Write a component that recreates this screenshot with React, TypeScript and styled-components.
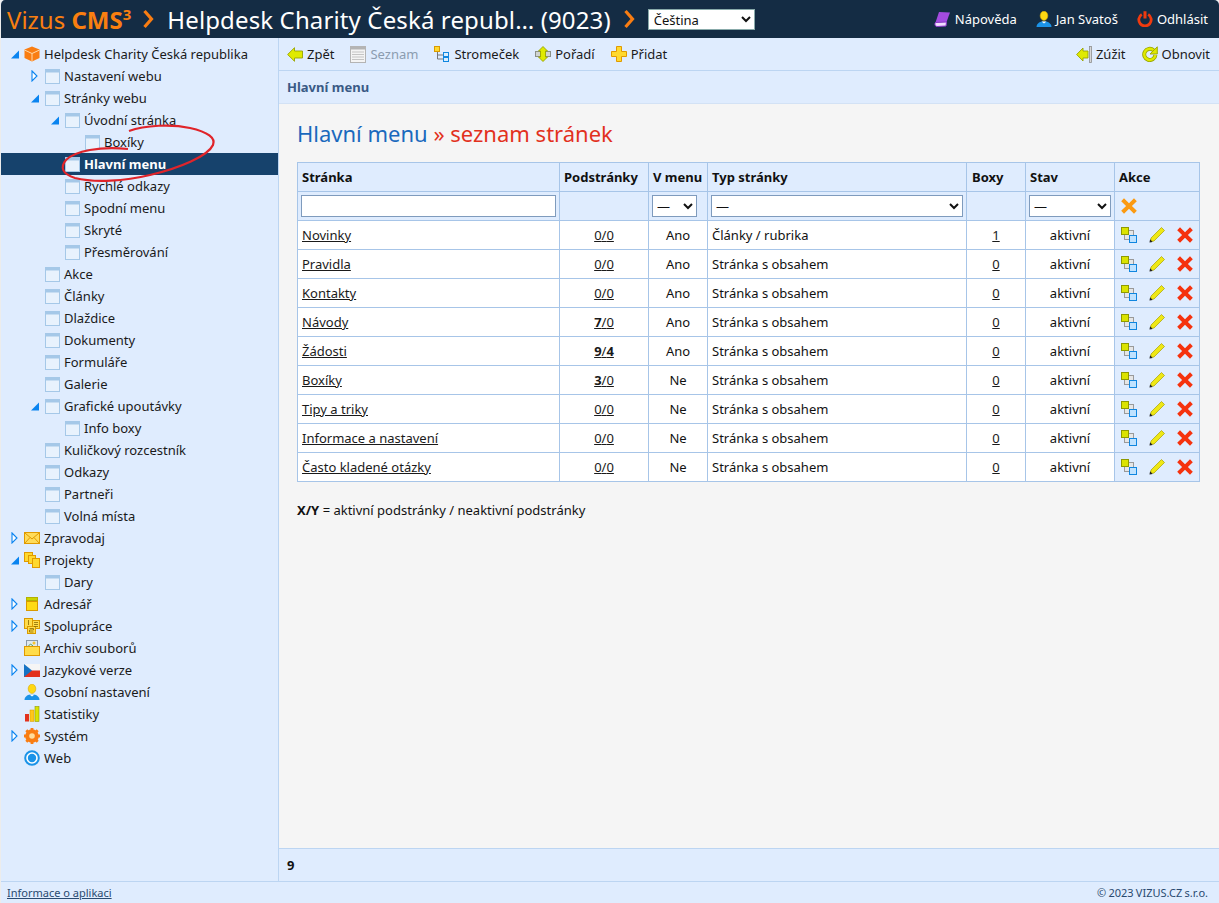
import React, {ReactNode} from 'react';
import styled, {createGlobalStyle} from 'styled-components';

const GlobalStyle = createGlobalStyle`
    html, body {
        margin: 0;
        height: 100%;
        background: #f0f0f0;
    }
    body {
        font-family: "Noto Sans", "Liberation Sans", sans-serif;
        font-size: 13px;
        color: #111;
    }
    #root {
        height: 100%;
    }
`;

const Page = styled.div`
    position: relative;
    height: 903px;
    display: flex;
    flex-direction: column;
    overflow: hidden;
    background: #dfecfe;
    border-left: 1px solid #ececec;
    border-radius: 5px 5px 0 0;
`;

const Header = styled.header`
    height: 38px;
    flex: none;
    display: flex;
    align-items: center;
    padding: 0 11px 0 6px;
    background: #142c44;
    color: #fff;
`;

const Logo = styled.div`
    font-size: 24px;
    color: #f97f10;
    white-space: nowrap;
    b { font-weight: 700; }
    sup { font-size: 15px; font-weight: 700; line-height: 0; vertical-align: 9px; }
`;

const Chevron = styled.svg<{$before: number; $after: number}>`
    flex: none;
    width: 12px;
    height: 20px;
    margin: 0 ${(p) => p.$after}px 0 ${(p) => p.$before}px;
`;

const SiteTitle = styled.div`
    font-size: 24px;
    white-space: nowrap;
    letter-spacing: 0.13px;
`;

const LangSelect = styled.select`
    width: 107px;
    height: 21px;
    font: 13px "Noto Sans", sans-serif;
    background: #fff;
    color: #111;
    border: 1px solid #8aa;
    padding: 0 0 0 1px;
    margin: 0;
`;

const UserMenu = styled.div`
    margin-left: auto;
    display: flex;
    gap: 19px;
`;

const UserLink = styled.span`
    display: flex;
    align-items: center;
    gap: 4px;
    font-size: 13px;
    white-space: nowrap;
`;

const Body = styled.div`
    flex: 1;
    display: flex;
    min-height: 0;
`;

const Sidebar = styled.nav`
    width: 277px;
    flex: none;
    padding-top: 5px;
    border-right: 1px solid #bcd5f2;
    background: #dfecfe;
`;

const TreeRow = styled.div<{$level: number; $active?: boolean}>`
    height: 22px;
    display: flex;
    align-items: center;
    padding-left: ${(p) => 9 + p.$level * 20}px;
    font-weight: ${(p) => (p.$active ? 700 : 400)};
    background: ${(p) => (p.$active ? '#16426c' : 'transparent')};
    color: ${(p) => (p.$active ? '#fff' : '#1a1a1a')};
    white-space: nowrap;
`;

const ArrowSlot = styled.span`
    width: 13px;
    height: 22px;
    flex: none;
    display: flex;
    align-items: center;
`;

const TreeIcon = styled.span<{$page?: boolean}>`
    width: 17px;
    height: 17px;
    flex: none;
    display: flex;
    align-items: center;
    justify-content: center;
    margin-right: ${(p) => (p.$page ? 3 : 4)}px;
    margin-left: ${(p) => (p.$page ? 1 : 0)}px;
`;

const Main = styled.main`
    flex: 1;
    min-width: 0;
    display: flex;
    flex-direction: column;
`;

const Toolbar = styled.div`
    height: 32px;
    flex: none;
    display: flex;
    align-items: center;
    gap: 16px;
    padding: 0 9px 0 8px;
    border-bottom: 1px solid #bcd5f2;
`;

const ToolButton = styled.span<{$disabled?: boolean}>`
    display: flex;
    align-items: center;
    gap: 4px;
    color: ${(p) => (p.$disabled ? '#8b9cb0' : '#1a1a1a')};
    white-space: nowrap;
`;

const ToolSpacer = styled.span`
    flex: 1;
`;

const Crumb = styled.div`
    height: 32px;
    flex: none;
    display: flex;
    align-items: center;
    padding-left: 8px;
    font-weight: 700;
    font-size: 13px;
    color: #3a5a85;
    border-bottom: 1px solid #d3e2f5;
`;

const Content = styled.section`
    flex: 1;
    background: #f5f5f5;
    padding: 13px 19px 0 18px;
    min-height: 0;
`;

const Heading = styled.h1`
    margin: 0 0 12px;
    height: 33px;
    line-height: 33px;
    font-size: 22px;
    font-weight: 400;
    color: #1a69bd;
    span { color: #e2311d; }
`;

const Table = styled.table`
    width: 902px;
    table-layout: fixed;
    border-collapse: collapse;
    background: #fff;

    th, td {
        border: 1px solid #a7c5e8;
        height: 29px;
        padding: 0 4px;
        box-sizing: border-box;
    }
    th {
        background: #dfecfe;
        text-align: left;
        font-weight: 700;
        white-space: nowrap;
    }
    a {
        color: #1a1a1a;
        text-decoration: underline;
    }
`;

const BoxesHead = styled.th`
    && { padding-left: 5px; }
`;

const FilterCell = styled.td`
    && { background: #dfecfe; padding: 0 3px; }
`;

const FilterInput = styled.input`
    display: block;
    width: 100%;
    height: 22px;
    box-sizing: border-box;
    background: #fff;
    border: 1px solid #7f9bbd;
    padding: 0 3px;
`;

const FilterSelect = styled.select<{$narrow?: boolean}>`
    display: block;
    width: ${(p) => (p.$narrow ? '45px' : '100%')};
    height: 22px;
    box-sizing: border-box;
    background: #fff;
    border: 1px solid #7f9bbd;
    font: 13px "Noto Sans", sans-serif;
    color: #111;
    padding: 0;
`;

const CenterCell = styled.td`
    text-align: center;
`;

const ActionCell = styled.td`
    && { background: #dfecfe; padding: 0 0 0 6px; }
`;

const ActionIcons = styled.div`
    display: flex;
    align-items: center;
    gap: 12px;
`;

const Legend = styled.p`
    margin: 19px 0 0;
    font-size: 13px;
`;

const CountBar = styled.div`
    height: 32px;
    flex: none;
    display: flex;
    align-items: center;
    padding-left: 8px;
    font-weight: 700;
    border-top: 1px solid #bcd5f2;
`;

const StatusBar = styled.footer`
    height: 21px;
    flex: none;
    display: flex;
    align-items: center;
    justify-content: space-between;
    padding: 0 11px 0 6px;
    font-size: 11px;
    color: #2a4a70;
    border-top: 1px solid #bcd5f2;
    a { color: #2a4a70; text-decoration: underline; }
`;

const Copyright = styled.span`
    word-spacing: -0.6px;
`;

const Scribble = styled.svg`
    position: absolute;
    left: 54px;
    top: 118px;
    width: 170px;
    height: 70px;
    pointer-events: none;
`;

const S = ({w = 16, h = 16, vb, children}: {w?: number; h?: number; vb?: string; children: ReactNode}) => (
    <svg width={w} height={h} viewBox={vb ?? `0 0 ${w} ${h}`} style={{display: 'block', flex: 'none'}}>{children}</svg>
);

const ArrowOpen = () => (
    <S w={10} h={9}><path d="M9 0.5V8.5H1Z" fill="#0a84f0"/></S>
);
const ArrowClosed = () => (
    <S w={8} h={12}><path d="M2 1L7 6L2 11Z" fill="#fff" stroke="#0a84f0" strokeWidth="1.1"/></S>
);

const PageIcon = () => (
    <S w={15} h={15}>
        <rect x="0.5" y="0.5" width="14" height="14" fill="#e8f2fd" stroke="#a5c8e8"/>
        <rect x="0.5" y="0.5" width="14" height="3" fill="#a5c8e8"/>
    </S>
);
const CubeIcon = () => (
    <S>
        <path d="M8 0.5L15.5 3.5V12L8 15.5L0.5 12V3.5Z" fill="#f97d12"/>
        <path d="M0.5 4L8 7.5L15.5 4M8 7.5V15.5" stroke="#ffd9a8" fill="none"/>
    </S>
);
const MailIcon = () => (
    <S h={12}>
        <rect x="0.5" y="0.5" width="15" height="11" fill="#ffdc5a" stroke="#e09a00"/>
        <path d="M1 1L8 7L15 1M1 11L6 5.5M15 11L10 5.5" stroke="#e09a00" fill="none"/>
    </S>
);
const ProjectIcon = () => (
    <S>
        <rect x="0.5" y="0.5" width="8" height="9" fill="#ffd92e" stroke="#e09a00"/>
        <rect x="4.5" y="3.5" width="7" height="8" fill="#ffd92e" stroke="#e09a00"/>
        <rect x="8.5" y="6.5" width="7" height="9" fill="#ffd92e" stroke="#e09a00"/>
    </S>
);
const AddressIcon = () => (
    <S h={14}>
        <rect x="2.5" y="0.5" width="11" height="3" fill="#c9d400" stroke="#b5b000"/>
        <rect x="2.5" y="4.5" width="11" height="9" fill="#ffdb14" stroke="#d99a00"/>
    </S>
);
const CooperateIcon = () => (
    <S>
        <rect x="0.5" y="0.5" width="8" height="10" fill="#ffdc4a" stroke="#d99a00"/>
        <rect x="8.5" y="2.5" width="7" height="8" fill="#ffdc4a" stroke="#d99a00"/>
        <rect x="3.5" y="8.5" width="8" height="7" fill="#ffdc4a" stroke="#d99a00"/>
        <path d="M4.5 2V7M10 4.5H14M10 6.5H14M10 8.5H14M5.5 10.5H9.5V12H5.5V14H9.5" stroke="#8a6a00" fill="none" strokeWidth="0.8"/>
    </S>
);
const ArchiveIcon = () => (
    <S>
        <rect x="2.5" y="0.5" width="11" height="7" fill="#dfe8ee" stroke="#8a9aa8"/>
        <circle cx="10" cy="3" r="1.5" fill="#f4c430"/>
        <path d="M3.5 7L6.5 4L9 6" stroke="#5aa050" fill="none"/>
        <rect x="0.5" y="6.5" width="15" height="9" fill="#ffdc4a" stroke="#e09a00"/>
    </S>
);
const FlagIcon = () => (
    <S h={13}>
        <rect width="16" height="6.5" fill="#f5f5f5"/>
        <rect y="6.5" width="16" height="6.5" fill="#e2311d"/>
        <path d="M0 0L8 6.5L0 13Z" fill="#1673c4"/>
    </S>
);
const PersonIcon = ({size = 16}: {size?: number}) => (
    <S w={size} h={size} vb="0 0 16 16">
        <ellipse cx="8" cy="4.8" rx="3.8" ry="4.6" fill="#ffd812" stroke="#d9a800" strokeWidth="0.6"/>
        <path d="M0.5 16C0.5 12.4 3.5 11 6 10.4H10C12.5 11 15.5 12.4 15.5 16Z" fill="#1b93e8"/>
        <path d="M5.5 10.6H10.5L8 12.4Z" fill="#fff"/>
    </S>
);
const BarsIcon = () => (
    <S>
        <rect x="1" y="8" width="4" height="7.5" fill="#e2311d"/>
        <rect x="6" y="4" width="4" height="11.5" fill="#ffc61a" stroke="#d99a00" strokeWidth="0.5"/>
        <rect x="11" y="0.5" width="4" height="15" fill="#dbe300" stroke="#8f9a00" strokeWidth="0.6"/>
    </S>
);
const GearIcon = () => (
    <S>
        <circle cx="8" cy="8" r="5" fill="none" stroke="#f97d12" strokeWidth="3.6"/>
        <path d="M8 0V16M0 8H16M2.3 2.3L13.7 13.7M13.7 2.3L2.3 13.7" stroke="#f97d12" strokeWidth="2.8"/>
        <circle cx="8" cy="8" r="2.8" fill="#ffdc9a"/>
    </S>
);
const WebIcon = () => (
    <S>
        <circle cx="8" cy="8" r="6.8" fill="#fff" stroke="#1a93e8" strokeWidth="2"/>
        <circle cx="8" cy="8" r="4.2" fill="#1a93e8"/>
    </S>
);

const treeIcons: Record<string, ReactNode> = {
    cube: <CubeIcon/>,
    mail: <MailIcon/>,
    project: <ProjectIcon/>,
    address: <AddressIcon/>,
    cooperate: <CooperateIcon/>,
    archive: <ArchiveIcon/>,
    flag: <FlagIcon/>,
    person: <PersonIcon/>,
    bars: <BarsIcon/>,
    gear: <GearIcon/>,
    web: <WebIcon/>,
};

type TreeItem = {label: string; level: number; arrow?: 'open' | 'closed'; icon?: string; active?: boolean};

const tree: TreeItem[] = [
    {label: 'Helpdesk Charity Česká republika', level: 0, arrow: 'open', icon: 'cube'},
    {label: 'Nastavení webu', level: 1, arrow: 'closed'},
    {label: 'Stránky webu', level: 1, arrow: 'open'},
    {label: 'Úvodní stránka', level: 2, arrow: 'open'},
    {label: 'Boxíky', level: 3},
    {label: 'Hlavní menu', level: 2, active: true},
    {label: 'Rychlé odkazy', level: 2},
    {label: 'Spodní menu', level: 2},
    {label: 'Skryté', level: 2},
    {label: 'Přesměrování', level: 2},
    {label: 'Akce', level: 1},
    {label: 'Články', level: 1},
    {label: 'Dlaždice', level: 1},
    {label: 'Dokumenty', level: 1},
    {label: 'Formuláře', level: 1},
    {label: 'Galerie', level: 1},
    {label: 'Grafické upoutávky', level: 1, arrow: 'open'},
    {label: 'Info boxy', level: 2},
    {label: 'Kuličkový rozcestník', level: 1},
    {label: 'Odkazy', level: 1},
    {label: 'Partneři', level: 1},
    {label: 'Volná místa', level: 1},
    {label: 'Zpravodaj', level: 0, arrow: 'closed', icon: 'mail'},
    {label: 'Projekty', level: 0, arrow: 'open', icon: 'project'},
    {label: 'Dary', level: 1},
    {label: 'Adresář', level: 0, arrow: 'closed', icon: 'address'},
    {label: 'Spolupráce', level: 0, arrow: 'closed', icon: 'cooperate'},
    {label: 'Archiv souborů', level: 0, icon: 'archive'},
    {label: 'Jazykové verze', level: 0, arrow: 'closed', icon: 'flag'},
    {label: 'Osobní nastavení', level: 0, icon: 'person'},
    {label: 'Statistiky', level: 0, icon: 'bars'},
    {label: 'Systém', level: 0, arrow: 'closed', icon: 'gear'},
    {label: 'Web', level: 0, icon: 'web'},
];

type PageRow = {name: string; active: string; inactive: string; bold?: boolean; menu: string; type: string; boxes: string};

const rows: PageRow[] = [
    {name: 'Novinky', active: '0', inactive: '0', menu: 'Ano', type: 'Články / rubrika', boxes: '1'},
    {name: 'Pravidla', active: '0', inactive: '0', menu: 'Ano', type: 'Stránka s obsahem', boxes: '0'},
    {name: 'Kontakty', active: '0', inactive: '0', menu: 'Ano', type: 'Stránka s obsahem', boxes: '0'},
    {name: 'Návody', active: '7', inactive: '0', bold: true, menu: 'Ano', type: 'Stránka s obsahem', boxes: '0'},
    {name: 'Žádosti', active: '9', inactive: '4', bold: true, menu: 'Ano', type: 'Stránka s obsahem', boxes: '0'},
    {name: 'Boxíky', active: '3', inactive: '0', bold: true, menu: 'Ne', type: 'Stránka s obsahem', boxes: '0'},
    {name: 'Tipy a triky', active: '0', inactive: '0', menu: 'Ne', type: 'Stránka s obsahem', boxes: '0'},
    {name: 'Informace a nastavení', active: '0', inactive: '0', menu: 'Ne', type: 'Stránka s obsahem', boxes: '0'},
    {name: 'Často kladené otázky', active: '0', inactive: '0', menu: 'Ne', type: 'Stránka s obsahem', boxes: '0'},
];

const CrossIcon = ({color}: {color: string}) => (
    <S>
        <path d="M3 0.3L8 5.2L13 0.3L15.8 3.2L10.9 8L15.8 12.8L13 15.7L8 10.8L3 15.7L0.2 12.8L5.1 8L0.2 3.2Z" fill={color}/>
    </S>
);
const TreeMoveIcon = () => (
    <S>
        <rect x="3.5" y="3.5" width="9" height="9" fill="#e6e6e6" stroke="#9a9a9a"/>
        <rect x="0.5" y="0.5" width="7" height="7" fill="#dbe300" stroke="#8f9a00"/>
        <rect x="8.5" y="8.5" width="7" height="7" fill="#bfe2ff" stroke="#0f86e0"/>
    </S>
);
const PencilIcon = () => (
    <S>
        <path d="M12.5 0.5L15.5 3.5L5 14L1.5 14.5L2 11Z" fill="#efe814" stroke="#a8a000" strokeWidth="0.7"/>
        <path d="M0.5 15.5L1.1 12.3L3.7 14.9Z" fill="#222"/>
    </S>
);

const Outline = ({d, fill = '#dfea00', stroke = '#98a400'}: {d: string; fill?: string; stroke?: string}) => (
    <path d={d} fill={fill} stroke={stroke} strokeWidth="0.9"/>
);

const BackIcon = () => <S h={15}><Outline d="M0.6 7.5L7.5 0.7V4H15.5V11H7.5V14.3Z"/></S>;
const ListIcon = () => (
    <S h={17}>
        <rect x="0.5" y="0.5" width="15" height="16" fill="#f4f4f4" stroke="#b4b4b4"/>
        <rect x="0.5" y="0.5" width="15" height="3" fill="#b4b4b4"/>
        <path d="M2 6H14M2 8.5H14M2 11H14M2 13.5H14" stroke="#c4c4c4"/>
    </S>
);
const TreeViewIcon = () => (
    <S>
        <path d="M3.5 6V13H9M3.5 9H9" fill="none" stroke="#777"/>
        <rect x="0.5" y="0.5" width="5" height="5" fill="#ffd92e" stroke="#d99a00"/>
        <rect x="9.5" y="6.5" width="5" height="4" fill="#d8eeff" stroke="#0f86e0"/>
        <rect x="9.5" y="11.5" width="5" height="4" fill="#d8eeff" stroke="#0f86e0"/>
    </S>
);
const OrderIcon = () => (
    <S>
        <rect x="0.5" y="5.5" width="15" height="5" fill="#d0d4d0" stroke="#8a9088"/>
        <Outline d="M8 0.5L12.5 5H10.5V11H12.5L8 15.5L3.5 11H5.5V5H3.5Z"/>
    </S>
);
const AddIcon = () => (
    <S>
        <path d="M5.5 0.5H10.5V5.5H15.5V10.5H10.5V15.5H5.5V10.5H0.5V5.5H5.5Z" fill="#ffd92e" stroke="#e09a00"/>
    </S>
);
const NarrowIcon = () => (
    <S h={17}>
        <Outline d="M0.6 8.5L7 2V5H12V12H7V15Z"/>
        <rect x="13.5" y="0.5" width="2" height="16" fill="#d8d8d8" stroke="#8e8e8e" strokeWidth="0.8"/>
    </S>
);
const RefreshIcon = () => (
    <S>
        <path d="M11.5 4.2A5.6 5.6 0 1 0 13.4 9" fill="none" stroke="#98a400" strokeWidth="4"/>
        <path d="M11.5 4.2A5.6 5.6 0 1 0 13.4 9" fill="none" stroke="#dfea00" strokeWidth="2.4"/>
        <Outline d="M15.3 0.8V8H8Z"/>
    </S>
);

const BookIcon = () => (
    <S w={17}>
        <path d="M5 1L16 1.5L12.5 11L1.5 11.5Z" fill="#a34be0"/>
        <path d="M1.5 11.5C0.3 13 1 15.5 3 15.5L12 15L12.5 11Z" fill="#f1dcff" stroke="#8a36c8" strokeWidth="1"/>
    </S>
);
const PowerIcon = () => (
    <S>
        <path d="M4.8 3.4A6.2 6.2 0 1 0 11.2 3.4" fill="none" stroke="#ef3a0f" strokeWidth="2.8"/>
        <path d="M8 0.3V7.5" stroke="#ef3a0f" strokeWidth="3"/>
    </S>
);

const ChevronIcon = () => (
    <path d="M2.5 2L9.5 10L2.5 18" fill="none" stroke="#f97d12" strokeWidth="3.2"/>
);

export default function App() {
    return (
        <>
            <GlobalStyle/>
            <Page>
                <Header>
                    <Logo>Vizus <b>CMS<sup>3</sup></b></Logo>
                    <Chevron $before={11} $after={13} viewBox="0 0 12 20"><ChevronIcon/></Chevron>
                    <SiteTitle>Helpdesk Charity Česká republ… (9023)</SiteTitle>
                    <Chevron $before={12} $after={13} viewBox="0 0 12 20"><ChevronIcon/></Chevron>
                    <LangSelect defaultValue="cs"><option value="cs">Čeština</option></LangSelect>
                    <UserMenu>
                        <UserLink><BookIcon/>Nápověda</UserLink>
                        <UserLink><PersonIcon/>Jan Svatoš</UserLink>
                        <UserLink><PowerIcon/>Odhlásit</UserLink>
                    </UserMenu>
                </Header>
                <Body>
                    <Sidebar>
                        {tree.map((item) => (
                            <TreeRow key={item.label} $level={item.level} $active={item.active}>
                                <ArrowSlot>
                                    {item.arrow === 'open' && <ArrowOpen/>}
                                    {item.arrow === 'closed' && <ArrowClosed/>}
                                </ArrowSlot>
                                <TreeIcon $page={!item.icon}>
                                    {item.icon ? treeIcons[item.icon] : <PageIcon/>}
                                </TreeIcon>
                                {item.label}
                            </TreeRow>
                        ))}
                    </Sidebar>
                    <Main>
                        <Toolbar>
                            <ToolButton><BackIcon/>Zpět</ToolButton>
                            <ToolButton $disabled><ListIcon/>Seznam</ToolButton>
                            <ToolButton><TreeViewIcon/>Stromeček</ToolButton>
                            <ToolButton><OrderIcon/>Pořadí</ToolButton>
                            <ToolButton><AddIcon/>Přidat</ToolButton>
                            <ToolSpacer/>
                            <ToolButton><NarrowIcon/>Zúžit</ToolButton>
                            <ToolButton><RefreshIcon/>Obnovit</ToolButton>
                        </Toolbar>
                        <Crumb>Hlavní menu</Crumb>
                        <Content>
                            <Heading>Hlavní menu <span>» seznam stránek</span></Heading>
                            <Table>
                                <colgroup>
                                    <col style={{width: 262}}/>
                                    <col style={{width: 89}}/>
                                    <col style={{width: 59}}/>
                                    <col style={{width: 259}}/>
                                    <col style={{width: 59}}/>
                                    <col style={{width: 89}}/>
                                    <col style={{width: 85}}/>
                                </colgroup>
                                <thead>
                                    <tr>
                                        <th>Stránka</th>
                                        <th>Podstránky</th>
                                        <th>V menu</th>
                                        <th>Typ stránky</th>
                                        <BoxesHead>Boxy</BoxesHead>
                                        <th>Stav</th>
                                        <th>Akce</th>
                                    </tr>
                                    <tr>
                                        <FilterCell><FilterInput/></FilterCell>
                                        <FilterCell/>
                                        <FilterCell><FilterSelect $narrow><option>—</option></FilterSelect></FilterCell>
                                        <FilterCell><FilterSelect><option>—</option></FilterSelect></FilterCell>
                                        <FilterCell/>
                                        <FilterCell><FilterSelect><option>—</option></FilterSelect></FilterCell>
                                        <ActionCell><CrossIcon color="#fb9a12"/></ActionCell>
                                    </tr>
                                </thead>
                                <tbody>
                                    {rows.map((row) => (
                                        <tr key={row.name}>
                                            <td><a href="#p">{row.name}</a></td>
                                            <CenterCell>
                                                <a href="#s">
                                                    {row.bold ? <b>{row.active}</b> : row.active}/
                                                    {row.inactive !== '0' ? <b>{row.inactive}</b> : row.inactive}
                                                </a>
                                            </CenterCell>
                                            <CenterCell>{row.menu}</CenterCell>
                                            <td>{row.type}</td>
                                            <CenterCell><a href="#b">{row.boxes}</a></CenterCell>
                                            <CenterCell>aktivní</CenterCell>
                                            <ActionCell>
                                                <ActionIcons>
                                                    <TreeMoveIcon/>
                                                    <PencilIcon/>
                                                    <CrossIcon color="#f5320e"/>
                                                </ActionIcons>
                                            </ActionCell>
                                        </tr>
                                    ))}
                                </tbody>
                            </Table>
                            <Legend><b>X/Y</b> = aktivní podstránky / neaktivní podstránky</Legend>
                        </Content>
                        <CountBar>9</CountBar>
                    </Main>
                </Body>
                <StatusBar>
                    <a href="#i">Informace o aplikaci</a>
                    <Copyright>© 2023 VIZUS.CZ s.r.o.</Copyright>
                </StatusBar>
                <Scribble viewBox="55 118 170 70">
                    <path d="M129 131C145 125 172 124 190 128C208 132 216 138 213 145C208 156 180 168 150 175C125 181 95 183 75 178C62 174 60 167 66 160C75 151 100 146 128 149" fill="none" stroke="#e0242a" strokeWidth="2.2"/>
                </Scribble>
            </Page>
        </>
    );
}
